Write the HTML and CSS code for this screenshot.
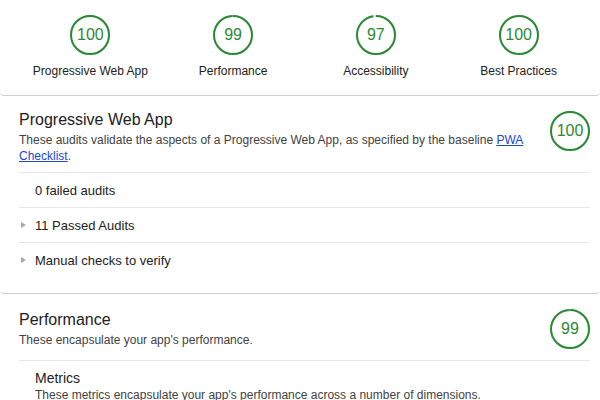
FILE: index.html
```html
<!DOCTYPE html>
<html lang="en">
<head>
<meta charset="utf-8">
<title>Lighthouse Report</title>
<link rel="stylesheet" href="styles.css">
</head>
<body>
<header class="scores">
  <div class="score">
    <div class="gauge">
      <svg class="ring" viewBox="0 0 40 40"><circle class="track" cx="20" cy="20" r="19"/><circle class="arc" cx="20" cy="20" r="19" style="stroke-dasharray:119.38 119.38"/></svg>
      <span class="num">100</span>
    </div>
    <div class="label">Progressive Web App</div>
  </div>
  <div class="score">
    <div class="gauge">
      <svg class="ring" viewBox="0 0 40 40"><circle class="track" cx="20" cy="20" r="19"/><circle class="arc" cx="20" cy="20" r="19" style="stroke-dasharray:118.19 119.38"/></svg>
      <span class="num">99</span>
    </div>
    <div class="label">Performance</div>
  </div>
  <div class="score">
    <div class="gauge">
      <svg class="ring" viewBox="0 0 40 40"><circle class="track" cx="20" cy="20" r="19"/><circle class="arc" cx="20" cy="20" r="19" style="stroke-dasharray:115.8 119.38"/></svg>
      <span class="num">97</span>
    </div>
    <div class="label">Accessibility</div>
  </div>
  <div class="score">
    <div class="gauge">
      <svg class="ring" viewBox="0 0 40 40"><circle class="track" cx="20" cy="20" r="19"/><circle class="arc" cx="20" cy="20" r="19" style="stroke-dasharray:119.38 119.38"/></svg>
      <span class="num">100</span>
    </div>
    <div class="label">Best Practices</div>
  </div>
</header>

<section class="category pwa">
  <div class="cat-header">
    <div class="cat-text">
      <h2 class="cat-title">Progressive Web App</h2>
      <p class="cat-desc">These audits validate the aspects of a Progressive Web App, as specified by the baseline <a href="#">PWA Checklist</a>.</p>
    </div>
    <div class="gauge">
      <svg class="ring" viewBox="0 0 40 40"><circle class="track" cx="20" cy="20" r="19"/><circle class="arc" cx="20" cy="20" r="19" style="stroke-dasharray:119.38 119.38"/></svg>
      <span class="num">100</span>
    </div>
  </div>
  <div class="row">0 failed audits</div>
  <div class="row toggle"><span class="tri"></span>11 Passed Audits</div>
  <div class="row toggle"><span class="tri"></span>Manual checks to verify</div>
</section>

<section class="category perf">
  <div class="cat-header">
    <div class="cat-text">
      <h2 class="cat-title">Performance</h2>
      <p class="cat-desc">These encapsulate your app's performance.</p>
    </div>
    <div class="gauge">
      <svg class="ring" viewBox="0 0 40 40"><circle class="track" cx="20" cy="20" r="19"/><circle class="arc" cx="20" cy="20" r="19" style="stroke-dasharray:118.19 119.38"/></svg>
      <span class="num">99</span>
    </div>
  </div>
  <div class="group">
    <h3 class="group-title">Metrics</h3>
    <p class="group-desc">These metrics encapsulate your app's performance across a number of dimensions.</p>
  </div>
</section>
</body>
</html>
```

FILE: styles.css
```css
* { box-sizing: border-box; }
html, body { margin: 0; padding: 0; background: #fff; }
body {
  font-family: "Liberation Sans", Arial, Helvetica, sans-serif;
  color: #212121;
  width: 600px;
  height: 400px;
  overflow: hidden;
}

.scores {
  display: grid;
  grid-template-columns: repeat(4, 1fr);
  padding: 15px 10px 17px 19px;
  border-bottom: 1px solid #cfcfcf;
  border-radius: 0 0 4px 4px;
}
.score {
  display: flex;
  flex-direction: column;
  align-items: center;
}
.label {
  margin-top: 9px;
  font-size: 12px;
  line-height: 14px;
  color: #212121;
}

.gauge {
  position: relative;
  width: 40px;
  height: 40px;
  flex: none;
  display: flex;
  align-items: center;
  justify-content: center;
}
.ring {
  position: absolute;
  inset: 0;
  width: 40px;
  height: 40px;
  transform: rotate(-90deg);
}
.track { fill: none; stroke: #e0e0e0; stroke-width: 2; }
.arc { fill: none; stroke: #2b8a34; stroke-width: 2; }
.num {
  position: relative;
  font-size: 16px;
  line-height: 16px;
  color: #2b8a34;
}

.category {
  padding: 14px 10px 16px 19px;
  border-bottom: 1px solid #cfcfcf;
  border-radius: 0 0 4px 4px;
}
.perf { padding-top: 16px; }
.cat-header {
  display: flex;
  align-items: flex-start;
  gap: 20px;
  padding-bottom: 8px;
}
.cat-text { flex: 1; }
.cat-header .gauge { margin-top: 1px; margin-bottom: 3px; }
.perf .cat-header .gauge { margin-top: -1px; }
.cat-title {
  margin: 0;
  font-size: 16px;
  line-height: 20px;
  font-weight: normal;
  color: #212121;
}
.cat-desc {
  margin: 2px 0 0;
  font-size: 12px;
  line-height: 16px;
  color: #424242;
}
.cat-desc a { color: #1a46d0; text-decoration: underline; }

.row {
  display: flex;
  align-items: center;
  height: 35px;
  padding-left: 16px;
  border-top: 1px solid #e6e6e6;
  font-size: 13px;
  color: #212121;
  position: relative;
}
.tri {
  position: absolute;
  left: 2px;
  top: 14px;
  width: 0;
  height: 0;
  border-top: 3px solid transparent;
  border-bottom: 3px solid transparent;
  border-left: 5px solid #a8a8a8;
}

.group {
  border-top: 1px solid #e6e6e6;
  padding: 8px 0 0 16px;
}
.group-title {
  margin: 0;
  font-size: 14px;
  line-height: 18px;
  font-weight: normal;
  color: #212121;
}
.group-desc {
  margin: 0;
  font-size: 12px;
  line-height: 16px;
  color: #424242;
  white-space: nowrap;
}
```
